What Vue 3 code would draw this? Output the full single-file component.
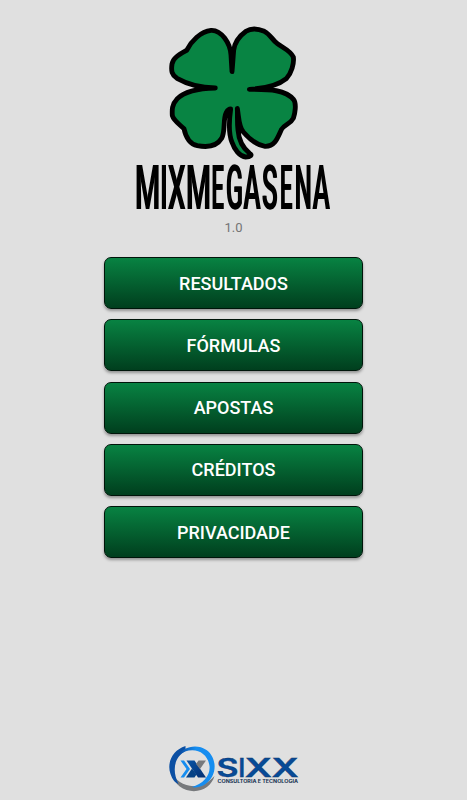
<script setup>
const titleLetters = [
  { char: 'M', x: 134.4, width: 25.2 },
  { char: 'I', x: 159.8, width: 7.3 },
  { char: 'X', x: 167.6, width: 17.4 },
  { char: 'M', x: 185.4, width: 25 },
  { char: 'E', x: 211, width: 12.4 },
  { char: 'G', x: 225.6, width: 17 },
  { char: 'A', x: 243, width: 17 },
  { char: 'S', x: 261.4, width: 15.6 },
  { char: 'E', x: 279.4, width: 12.4 },
  { char: 'N', x: 294.2, width: 17 },
  { char: 'A', x: 312.2, width: 17 },
]
const brandLetters = [
  { char: 'S', x: 216, width: 22 },
  { char: 'I', x: 238, width: 6.6 },
  { char: 'X', x: 244.3, width: 27.2 },
  { char: 'X', x: 271, width: 27.2 },
]
const menu = ['RESULTADOS', 'FÓRMULAS', 'APOSTAS', 'CRÉDITOS', 'PRIVACIDADE']
</script>

<template>
  <main class="screen">
    <svg class="hero" viewBox="0 0 467 216" role="img" aria-label="MIXMEGASENA">
      <g transform="translate(160 20) scale(.33333)">
        <path class="clover" d="M216 155 L213 105 C211 70 184 29 153 31 C122 34 94 63 80 91 C59 103 39 113 36 132 C33 153 35 164 51 175 C81 192 117 203 166 204 C119 205 74 214 52 236 C35 254 36 270 37 287 C41 302 58 313 72 326 C77 350 90 372 112 377 C148 384 173 375 185 355 C197 332 188 298 199 277 C203 270 208 267 212 267 C207 303 204 338 216 367 C223 388 239 410 257 411 C272 411 278 405 269 400 C246 382 236 358 234 330 C231 304 233 285 232 265 C237 295 236 321 250 336 C268 357 288 375 315 379 C344 380 352 356 364 329 C373 313 392 312 400 295 C405 281 410 251 401 239 C376 209 332 208 268 208 C309 206 352 198 379 176 C394 160 403 130 400 111 C391 91 369 84 351 70 C338 61 331 43 313 34 C294 26 272 25 258 34 C240 47 224 66 221 91 C219 115 218 134 216 155 Z" />
      </g>
      <g class="title">
        <text v-for="(l, i) in titleLetters" :key="i" :x="l.x" y="208.8" :textLength="l.width" lengthAdjust="spacingAndGlyphs">{{ l.char }}</text>
      </g>
    </svg>
    <p class="version">1.0</p>
    <nav class="menu">
      <button v-for="item in menu" :key="item" class="menu-button">{{ item }}</button>
    </nav>
    <svg class="brand" viewBox="160 738 150 62" role="img" aria-label="SIXX">
      <defs>
        <linearGradient id="blue-ring" x1="0" y1="0" x2="1" y2="0">
          <stop offset="0" stop-color="#08459a" />
          <stop offset=".5" stop-color="#168df0" />
        </linearGradient>
        <linearGradient id="mark-x" x1="0" y1="0" x2="1" y2="1">
          <stop offset="0" stop-color="#0754a6" />
          <stop offset="1" stop-color="#052e70" />
        </linearGradient>
      </defs>
      <path fill="#77797c" d="M171 766 C170 777 176 787 186 790 C199 794 211 787 214 776 C206 785 195 788 186 785 C176 782 171 775 171 766 Z" />
      <path fill="#0b4fa3" d="M185 746 C172 750 166 763 170 774 C172 780 175 783 178 784 C171 770 174 757 185 751 Z" />
      <path fill="url(#blue-ring)" d="M177 756 C182 747 196 743 206 750 C217 758 217 776 205 784 C201 787 195 788 191 787 C203 784 210 775 209 766 C207 751 191 745 177 756 Z" />
      <path fill="#168df0" d="M180 760.5 H183.5 L189.5 769 L183.5 777.5 H180 L186 769 Z" />
      <path fill="url(#mark-x)" d="M186 760.5 H194 L205.5 777.5 H197.5 Z" />
      <path fill="#77797c" d="M198 760.5 H205.5 L199.5 769 L195.5 764 Z" />
      <path fill="#064286" d="M191.5 768.5 L196 774.5 L194 777.5 H185.5 Z" />
      <g class="brand-name">
        <text v-for="(l, i) in brandLetters" :key="i" :x="l.x" y="777.3" :textLength="l.width" lengthAdjust="spacingAndGlyphs">{{ l.char }}</text>
      </g>
      <text class="tagline" x="217" y="783.2" textLength="80.5" lengthAdjust="spacingAndGlyphs">CONSULTORIA E TECNOLOGIA</text>
    </svg>
  </main>
</template>

<style>
body { margin: 0; background: #e0e0e0; }
</style>

<style scoped>
.screen {
  display: flex;
  flex-direction: column;
  align-items: center;
  height: 800px;
  background: #e0e0e0;
  font-family: Roboto, sans-serif;
  overflow: hidden;
}
.hero { display: block; width: 467px; height: 216px; flex: none; }
.clover { fill: #088443; stroke: #000; stroke-width: 14.5; stroke-linejoin: round; stroke-linecap: round; }
.title { font: 500 62px Roboto, sans-serif; fill: #000; filter: drop-shadow(1.8px 0 0 #000); }
.version { margin: 4px 0 0; height: 16px; line-height: 16px; font-size: 13px; color: #747474; }
.menu { display: flex; flex-direction: column; gap: 10.25px; width: 259px; margin-top: 21px; }
.menu-button {
  box-sizing: border-box;
  height: 52px;
  padding: 1px 0 0;
  border: 1.5px solid #00150a;
  border-radius: 7px;
  background: linear-gradient(#088443, #003d1d);
  background-origin: border-box;
  box-shadow: 0 2px 3px rgba(0, 0, 0, .35);
  color: #fff;
  font: 500 18px/1 Roboto, sans-serif;
}
.brand { display: block; width: 150px; height: 62px; margin-top: auto; flex: none; transform: translateX(1.5px); }
.brand-name { font: 600 25.5px Inter, sans-serif; fill: #064b98; stroke: #12356a; stroke-width: .4; }
.tagline { font: 700 4.5px Inter, sans-serif; fill: #173252; }
</style>
